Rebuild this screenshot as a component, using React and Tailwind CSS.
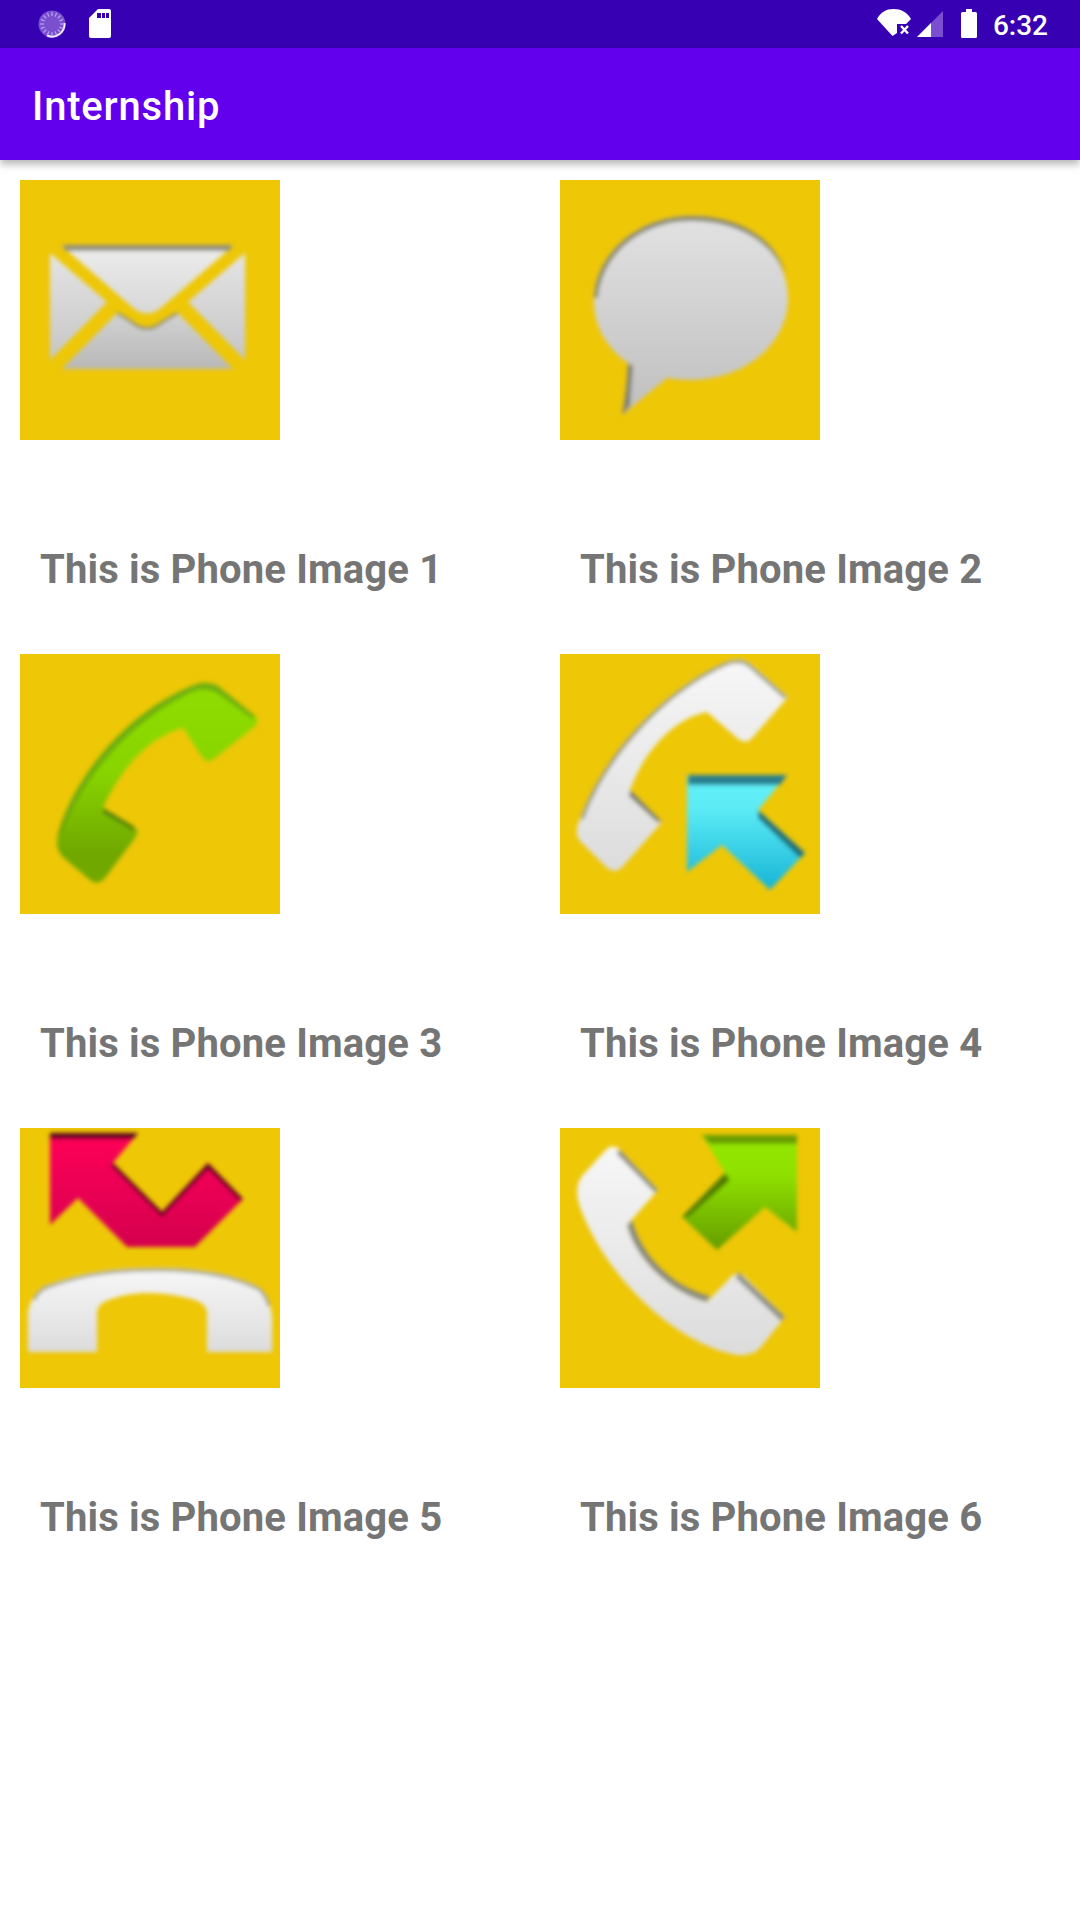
import React from "react";

const F = { fontFamily: "Roboto, sans-serif" };

function Defs() {
  return (
    <svg width="0" height="0" className="absolute">
      <defs>
        <filter id="soft" x="-10%" y="-10%" width="120%" height="120%"><feGaussianBlur stdDeviation="2" /></filter>
        <linearGradient id="flap" x1="0" y1="0" x2="0" y2="1"><stop offset="0" stopColor="#ececec" /><stop offset="1" stopColor="#d8d8d8" /></linearGradient>
        <linearGradient id="side" x1="0" y1="0" x2="0" y2="1"><stop offset="0" stopColor="#e4e4e4" /><stop offset="1" stopColor="#c6c6c6" /></linearGradient>
        <linearGradient id="bottom" x1="0" y1="0" x2="0" y2="1"><stop offset="0" stopColor="#d2d2d2" /><stop offset="1" stopColor="#b8b8b8" /></linearGradient>
        <linearGradient id="bubble" x1="0" y1="0" x2="0" y2="1"><stop offset="0" stopColor="#e2e2e2" /><stop offset="1" stopColor="#bfbfbf" /></linearGradient>
        <linearGradient id="green" x1="0" y1="0" x2="0" y2="1"><stop offset="0" stopColor="#8fdd00" /><stop offset="0.45" stopColor="#88d400" /><stop offset="0.85" stopColor="#70a800" /></linearGradient>
        <linearGradient id="white" x1="0" y1="0" x2="0" y2="1"><stop offset="0" stopColor="#f7f7f7" /><stop offset="1" stopColor="#dcdcdc" /></linearGradient>
        <linearGradient id="cyan" x1="0" y1="0" x2="0" y2="1"><stop offset="0" stopColor="#62f0f8" /><stop offset="0.3" stopColor="#5cebf6" /><stop offset="1" stopColor="#16b4d6" /></linearGradient>
        <linearGradient id="red" x1="0" y1="0" x2="0" y2="1"><stop offset="0" stopColor="#ff0058" /><stop offset="1" stopColor="#d4004e" /></linearGradient>
        <linearGradient id="lime" x1="0" y1="0" x2="0" y2="1"><stop offset="0" stopColor="#94e800" /><stop offset="0.35" stopColor="#8fe000" /><stop offset="1" stopColor="#659c00" /></linearGradient>
      </defs>
    </svg>
  );
}

function Mail() {
  return (
    <g filter="url(#soft)">
      <path d="M42 66H213L142 127Q127 140 112 127Z" fill="url(#flap)" />
      <path d="M42 65H213L209 71H46Z" fill="#8f8f80" />
      <path d="M30 73L87 122L30 180Z" fill="url(#side)" />
      <path d="M225 73L168 122L225 180Z" fill="url(#side)" />
      <path d="M42 189L97 133L110 140Q127 156 144 140L158 133L213 189Z" fill="url(#bottom)" />
      <path d="M97 133L110 141Q127 156 144 141L158 133" fill="none" stroke="#8a8a78" strokeWidth="2.5" />
    </g>
  );
}

function Bubble() {
  return (
    <g filter="url(#soft)">
      <path d="M68 183C42 165 33 140 34 118C36 72 80 36 131 36C183 36 228 72 228 118C228 165 183 200 131 200C122 200 115 199 107 198L62 235C66 215 67 200 68 183Z" fill="url(#bubble)" />
      <path d="M34 118C36 72 80 36 131 36C183 36 218 62 226 96C212 62 178 41 131 41C84 41 42 72 38 118Z" fill="#8a8a78" />
      <path d="M68 183C67 200 66 215 62 235L70 226C71 210 72 198 73 186Z" fill="#807f70" />
    </g>
  );
}

function Phone3() {
  return (
    <g filter="url(#soft)">
      <path d="M177 30Q193 26 203 36L235 62Q240 68 234 73L194 105Q187 110 182 103L163 74C130 82 100 115 83 154L113 172Q120 177 115 184L85 224Q78 232 70 226L44 204Q34 195 38 180C55 120 110 55 177 30Z" fill="url(#green)" />
      <path d="M38 180C55 120 110 55 177 30Q193 26 203 36L235 62L233 65L200 41Q190 34 177 36C115 61 60 125 41 180Z" fill="#5f9a10" opacity="0.7" />
      <path d="M83 154L113 172L116 178L83 159Z" fill="#4f7d08" />
    </g>
  );
}

function Phone4() {
  return (
    <g filter="url(#soft)">
      <path d="M166 8Q181 2 192 11L228 43L193 83Q186 92 176 83L147 58C115 64 85 95 70 136L102 168L64 211Q55 222 45 212L21 188Q13 180 20 165C42 105 100 37 166 8Z" fill="url(#white)" />
      <path d="M22 165C43 106 101 39 166 10Q181 4 191 13L226 44" fill="none" stroke="#9d9d90" strokeWidth="3.5" />
      <path d="M70 136L102 168L97 168L69 142Z" fill="#77776e" />
      <path d="M127 121H227L198 156L245 199L210 236L162 191L127 218Z" fill="url(#cyan)" />
      <path d="M128 121H227L220 131H128Z" fill="#2b7f90" />
      <path d="M198 156L245 199L240 204L198 164Z" fill="#246f7c" />
    </g>
  );
}

function Hang5() {
  return (
    <g filter="url(#soft)">
      <path d="M30 5H118L93 35L142 84L188 35L223 71L175 119H107L58 70L30 97Z" fill="url(#red)" />
      <path d="M30 5H118L113 11H30Z" fill="#5a0020" />
      <path d="M93 35L142 84L188 35L223 71L220 73L188 41L142 89L91 38Z" fill="#5a0020" />
      <path d="M8 224V184Q12 165 25 158C60 145 90 140 137 140C180 140 215 146 240 160Q250 168 252 190V224H187V184Q185 175 175 172C145 163 115 163 95 170Q78 174 77 184V224Z" fill="url(#white)" />
      <path d="M14 172Q18 164 25 160C60 147 90 142 137 142C180 142 215 148 240 162Q246 168 249 178" fill="none" stroke="#a0a098" strokeWidth="3" />
    </g>
  );
}

function Phone6() {
  return (
    <g filter="url(#soft)">
      <path d="M44 24Q52 14 60 22L98 62L67 97C75 130 110 165 147 174L170 150Q178 141 186 150L225 189L200 220Q193 228 177 227C110 215 40 140 19 76Q14 60 22 48Z" fill="url(#white)" />
      <path d="M60 22L98 62L95 65L56 25Z" fill="#8e8e86" />
      <path d="M67 97C75 130 110 165 147 174L150 168C115 160 82 130 72 92Z" fill="#8a8a80" />
      <path d="M178 144L225 189L221 193L176 150Z" fill="#8e8e86" />
      <path d="M142 7H237V104L205 79L157 122L122 89L165 45Z" fill="url(#lime)" />
      <path d="M142 7H237V16H150Z" fill="#6a9e00" />
      <path d="M165 45L122 89L128 89L170 52Z" fill="#4f7a00" />
    </g>
  );
}

const items = [
  { n: 1, art: <Mail /> },
  { n: 2, art: <Bubble /> },
  { n: 3, art: <Phone3 /> },
  { n: 4, art: <Phone4 /> },
  { n: 5, art: <Hang5 /> },
  { n: 6, art: <Phone6 /> },
];

function StatusBar() {
  const spokes = Array.from({ length: 16 }, (_, i) => i * 22.5);
  return (
    <div className="h-12 bg-[#3700b3] flex items-center pl-[38px] pr-8 text-white">
      <svg width="28" height="28" viewBox="0 0 28 28" className="shrink-0">
        <circle cx="14" cy="14" r="13.5" fill="#7a50d0" />
        <path d="M26.5 13A12.5 12.5 0 0 1 9 25.5" fill="none" stroke="#efeafc" strokeWidth="2" />
        {spokes.map((a) => (
          <line key={a} x1="14" y1="2" x2="14" y2="6" stroke="#b9a4ec" strokeWidth="1.2" transform={`rotate(${a} 14 14)`} />
        ))}
      </svg>
      <svg width="22" height="30" viewBox="0 0 22 30" className="ml-[23px] shrink-0">
        <path d="M9 0H20Q22 0 22 2V27Q22 29 20 29H2Q0 29 0 27V9Z" fill="#fff" />
        <path d="M8 4h4v5H8zM13 4h3v5h-3zM17 4h3v5h-3z" fill="#3700b3" />
      </svg>
      <div className="flex-1" />
      <svg width="34" height="30" viewBox="0 0 34 30" className="shrink-0">
        <path d="M15.5 27L0 10C4 3 9 0 16.5 0C24 0 30 3 34 10L29 15H20V24Z" fill="#fff" />
        <path d="M24 17L31 24.5M31 17L24 24.5" stroke="#fff" strokeWidth="2.4" />
      </svg>
      <svg width="26" height="26" viewBox="0 0 26 26" className="ml-1.5 shrink-0">
        <path d="M0 26L26 0V26Z" fill="#7a50d0" />
        <path d="M0 26L14 12V26Z" fill="#fff" />
      </svg>
      <svg width="16" height="30" viewBox="0 0 16 30" className="ml-[18px] shrink-0">
        <path d="M5 0H11V3H14.5Q16 3 16 4.5V27.5Q16 29 14.5 29H1.5Q0 29 0 27.5V4.5Q0 3 1.5 3H5Z" fill="#fff" />
      </svg>
      <span className="ml-4 pt-[3px] text-[28px] leading-none font-medium" style={F}>6:32</span>
    </div>
  );
}

export default function App() {
  return (
    <div className="w-[1080px] h-[1920px] bg-white overflow-hidden relative" style={F}>
      <Defs />
      <StatusBar />
      <div className="h-28 bg-[#6200ee] flex items-center pl-8 pt-[5px] shadow-[0_4px_8px_rgba(0,0,0,0.3)] relative">
        <span className="text-[40px] leading-none font-medium text-white tracking-[0.8px]">Internship</span>
      </div>
      <div className="grid grid-cols-2">
        {items.map((it) => (
          <div key={it.n} className="h-[474px] pt-5 pl-5">
            <svg width="260" height="260" viewBox="0 0 260 260" className="block bg-[#eec707]">{it.art}</svg>
            <p className="mt-[105px] pl-5 text-[40px] leading-[50px] font-bold text-[#757575] tracking-[0.15px]">This is Phone Image {it.n}</p>
          </div>
        ))}
      </div>
    </div>
  );
}
